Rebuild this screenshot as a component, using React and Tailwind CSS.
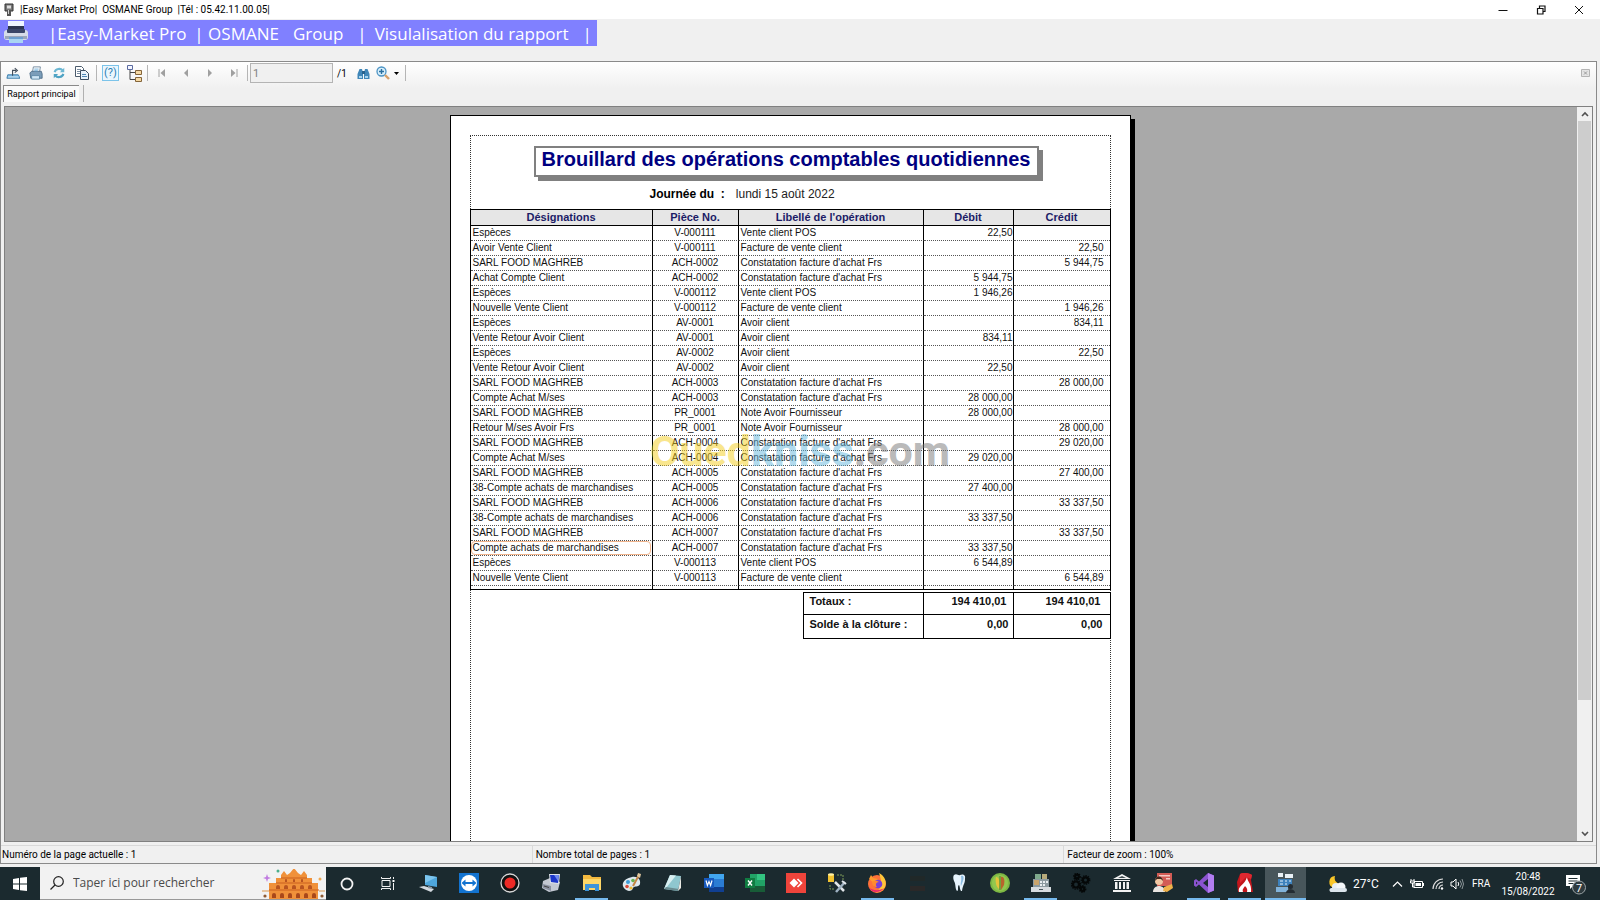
import React from 'react'

const achat = "Constatation facture d'achat Frs"

const rows = [
  ['Espèces', 'V-000111', 'Vente client POS', '22,50', ''],
  ['Avoir Vente Client', 'V-000111', 'Facture de vente client', '', '22,50'],
  ['SARL FOOD MAGHREB', 'ACH-0002', achat, '', '5 944,75'],
  ['Achat Compte Client', 'ACH-0002', achat, '5 944,75', ''],
  ['Espèces', 'V-000112', 'Vente client POS', '1 946,26', ''],
  ['Nouvelle Vente Client', 'V-000112', 'Facture de vente client', '', '1 946,26'],
  ['Espèces', 'AV-0001', 'Avoir client', '', '834,11'],
  ['Vente Retour Avoir Client', 'AV-0001', 'Avoir client', '834,11', ''],
  ['Espèces', 'AV-0002', 'Avoir client', '', '22,50'],
  ['Vente Retour Avoir Client', 'AV-0002', 'Avoir client', '22,50', ''],
  ['SARL FOOD MAGHREB', 'ACH-0003', achat, '', '28 000,00'],
  ['Compte Achat M/ses', 'ACH-0003', achat, '28 000,00', ''],
  ['SARL FOOD MAGHREB', 'PR_0001', 'Note Avoir Fournisseur', '28 000,00', ''],
  ['Retour M/ses Avoir Frs', 'PR_0001', 'Note Avoir Fournisseur', '', '28 000,00'],
  ['SARL FOOD MAGHREB', 'ACH-0004', achat, '', '29 020,00'],
  ['Compte Achat M/ses', 'ACH-0004', achat, '29 020,00', ''],
  ['SARL FOOD MAGHREB', 'ACH-0005', achat, '', '27 400,00'],
  ['38-Compte achats de marchandises', 'ACH-0005', achat, '27 400,00', ''],
  ['SARL FOOD MAGHREB', 'ACH-0006', achat, '', '33 337,50'],
  ['38-Compte achats de marchandises', 'ACH-0006', achat, '33 337,50', ''],
  ['SARL FOOD MAGHREB', 'ACH-0007', achat, '', '33 337,50'],
  ['Compte achats de marchandises', 'ACH-0007', achat, '33 337,50', ''],
  ['Espèces', 'V-000113', 'Vente client POS', '6 544,89', ''],
  ['Nouvelle Vente Client', 'V-000113', 'Facture de vente client', '', '6 544,89'],
]

const selectedRow = 21

function Icon({ children, className = 'w-5 h-5', box = '0 0 20 20' }) {
  return (
    <svg viewBox={box} className={className} fill="none" aria-hidden="true">
      {children}
    </svg>
  )
}

/* ---------- Title bar and banner ---------- */

function TitleBar() {
  return (
    <header className="flex items-center h-[19px] bg-white text-[10px] leading-4 text-black shrink-0">
      <Icon className="w-[10px] h-[14px] ml-1 mr-[6px]" box="0 0 10 14">
        <path d="M1 1h8v7H1z" fill="#777" stroke="#333" />
        <path d="M3 2.500h4v3H3z" fill="#ddd" />
        <path d="M3 8h4v5H3z" fill="#555" />
        <path d="M4.500 7v4" stroke="#ccc" />
      </Icon>
      <h1 className="flex-1 whitespace-pre">|Easy Market Pro|  OSMANE Group  |Tél : 05.42.11.00.05|</h1>
      <button aria-label="Réduire" className="w-[38px] flex justify-center">
        <Icon className="w-[10px] h-[10px]" box="0 0 10 10">
          <path d="M0.500 5.500h9" stroke="#111" />
        </Icon>
      </button>
      <button aria-label="Restaurer" className="w-[38px] flex justify-center">
        <Icon className="w-[10px] h-[10px]" box="0 0 10 10">
          <path d="M1.500 3.500h5.500v5.500H1.500zM3.500 3.500v-2.500h5.500v5.500H7" stroke="#111" strokeWidth="1.200" />
        </Icon>
      </button>
      <button aria-label="Fermer" className="w-[38px] flex justify-center mr-[2px]">
        <Icon className="w-[10px] h-[10px]" box="0 0 10 10">
          <path d="M1 1l8 8M9 1l-8 8" stroke="#111" />
        </Icon>
      </button>
    </header>
  )
}

function Banner() {
  return (
    <div className="h-[42px] pt-px shrink-0">
      <div className="flex items-center w-[597px] h-[26px] bg-[#8080ff] text-white text-[17px] leading-6 font-medium whitespace-nowrap pl-1 pt-[2px] font-['Open_Sans','Segoe_UI',sans-serif]">
        <Icon className="w-6 h-6 mr-5 mb-1" box="0 0 24 24">
          <path d="M4 1h16v9H4z" fill="#eef4ff" />
          <path d="M4 6h16v5H4z" fill="#2c3550" />
          <rect x="0" y="10" width="24" height="10" rx="3" fill="#d5dce8" />
          <rect x="3" y="9" width="18" height="4" rx="1" fill="#3a4668" />
          <path d="M1 16h22v3H1z" fill="#9aa6ba" />
          <path d="M5 17h14v6H5z" fill="#a9d4f2" />
          <path d="M5 17h14v2H5z" fill="#6d9fd0" />
        </Icon>
        <span>|Easy-Market Pro</span>
        <span className="ml-2">| OSMANE</span>
        <span className="ml-[14px]">Group</span>
        <span className="ml-[14px]">|</span>
        <span className="ml-2">Visulalisation du rapport</span>
        <span className="ml-[14px]">|</span>
      </div>
    </div>
  )
}

/* ---------- Report viewer toolbar ---------- */

function Separator() {
  return <span className="w-px h-4 bg-[#b5b5b5] mx-[2px]" />
}

function ToolButton({ label, children, className = 'w-[23px]' }) {
  return (
    <button aria-label={label} className={`flex items-center justify-center h-5 ${className}`}>
      {children}
    </button>
  )
}

function Toolbar() {
  return (
    <div role="toolbar" className="flex items-center h-[22px] pr-[6px]">
      <ToolButton label="Exporter">
        <Icon className="w-[14px] h-[14px]" box="0 0 16 16">
          <path d="M2 10h12l2 4H1z" fill="#7db8e0" stroke="#3b7ba8" />
          <path d="M2.500 12.500h12" stroke="#dff0fb" />
          <path d="M7.500 11V5h4M10 2.500L13 5l-3 2.500" stroke="#444f5c" strokeWidth="1.300" />
        </Icon>
      </ToolButton>
      <ToolButton label="Imprimer">
        <Icon className="w-[14px] h-[14px]" box="0 0 16 16">
          <path d="M5 1h8l-1 6H4z" fill="#fff" stroke="#6a8298" />
          <path d="M1 8l2-2h11l1 3v5H2z" fill="#7b9db9" stroke="#4d6c86" />
          <path d="M3 11h9v4H3z" fill="#cfe6f5" stroke="#5d87a5" />
          <path d="M6 3.500h5M6 5.500h4" stroke="#62a9d8" />
        </Icon>
      </ToolButton>
      <ToolButton label="Actualiser">
        <Icon className="w-[14px] h-[14px]" box="0 0 16 16">
          <path d="M3 7c1-4 7-5 9-2" stroke="#6cb7d3" strokeWidth="2.400" />
          <path d="M14 2v5H9z" fill="#6cb7d3" />
          <path d="M13 9c-1 4-7 5-9 2" stroke="#4fa3c4" strokeWidth="2.400" />
          <path d="M2 14V9h5z" fill="#4fa3c4" />
        </Icon>
      </ToolButton>
      <ToolButton label="Copier" className="w-6">
        <Icon className="w-4 h-4" box="0 0 16 16">
          <path d="M1.500 1.500h6l2 2v8h-8z" fill="#fff" stroke="#4b5b6c" />
          <path d="M3 4.500h4M3 6.500h4M3 8.500h4" stroke="#7b8ea1" />
          <path d="M6.500 5.500h5l3 3v6h-8z" fill="#e8f2fa" stroke="#3c4d5f" />
          <path d="M8 9.500h4M8 11.500h5" stroke="#4e86b4" />
        </Icon>
      </ToolButton>
      <Separator />
      <ToolButton label="Panneau de paramètres">
        <span className="flex items-center justify-center w-[17px] h-4 border border-[#7cc4ea] bg-[#eaf6fd] text-[#2c7fb4] text-[11px] leading-3">
          (?)
        </span>
      </ToolButton>
      <ToolButton label="Arborescence des groupes" className="w-[23px]">
        <Icon className="w-4 h-[18px]" box="0 0 16 18">
          <path d="M4 5v10.500h6M4 8.500h6" stroke="#444" />
          <path d="M1.500 1.500h5v4h-5z" fill="#f4f6ff" stroke="#5a6aa0" />
          <path d="M9.500 6.500h6v4h-6zM9.500 13.500h6v4h-6z" fill="#f6d9a4" stroke="#84653a" />
        </Icon>
      </ToolButton>
      <Separator />
      <ToolButton label="Première page" className="w-6">
        <Icon className="w-[8px] h-[8px]" box="0 0 8 8">
          <path d="M1 0v8" stroke="#a0a0a0" />
          <path d="M7 0v8L2.500 4z" fill="#a0a0a0" />
        </Icon>
      </ToolButton>
      <ToolButton label="Page précédente" className="w-6">
        <Icon className="w-[8px] h-[8px]" box="0 0 8 8">
          <path d="M6 0v8L2 4z" fill="#a0a0a0" />
        </Icon>
      </ToolButton>
      <ToolButton label="Page suivante" className="w-6">
        <Icon className="w-[8px] h-[8px]" box="0 0 8 8">
          <path d="M2 0v8l4-4z" fill="#a0a0a0" />
        </Icon>
      </ToolButton>
      <ToolButton label="Dernière page">
        <Icon className="w-[8px] h-[8px]" box="0 0 8 8">
          <path d="M7 0v8" stroke="#a0a0a0" />
          <path d="M1 0v8l4.500-4z" fill="#a0a0a0" />
        </Icon>
      </ToolButton>
      <Separator />
      <input
        aria-label="Page"
        defaultValue="1"
        className="w-[83px] h-5 px-[2px] border border-[#b4b4b4] bg-[#f0f0f0] text-[11px] text-[#808080]"
      />
      <span className="ml-1 mr-[5px] text-[10px] text-black">/1</span>
      <ToolButton label="Rechercher">
        <Icon className="w-[13px] h-[13px]" box="0 0 13 13">
          <path d="M2.500 2h2.500l1 4v6H0.500V7zM10.500 2H8L7 6v6h5.500V7z" fill="#3f86b8" />
          <path d="M2 9h3v2H2zM8 9h3v2H8z" fill="#a8d5ef" />
          <path d="M5 4h3v3H5z" fill="#27628d" />
        </Icon>
      </ToolButton>
      <button aria-label="Zoom" className="flex items-center gap-1 h-5 ml-px">
        <Icon className="w-[14px] h-[14px]" box="0 0 14 14">
          <circle cx="5.500" cy="5.500" r="4.500" fill="#d9effb" stroke="#4b93c4" strokeWidth="1.300" />
          <path d="M3 5.500h5M5.500 3v5" stroke="#2a6f9f" strokeWidth="1.400" />
          <path d="M9 9l4 4" stroke="#d8a069" strokeWidth="2.400" />
        </Icon>
        <Icon className="w-[5px] h-[3px]" box="0 0 5 3">
          <path d="M0 0h5L2.500 3z" fill="#000" />
        </Icon>
      </button>
      <span className="w-px h-4 bg-[#b5b5b5] ml-[6px]" />
      <button aria-label="Fermer la vue" className="ml-auto">
        <Icon className="w-[9px] h-[8px]" box="0 0 9 8">
          <path d="M0.500 0.500h8v7h-8z" fill="#e4e4e4" stroke="#b4b4b4" />
          <path d="M3 2.500l3 3M6 2.500l-3 3" stroke="#999" />
        </Icon>
      </button>
    </div>
  )
}

function Tabs() {
  return (
    <div role="tablist" className="flex h-[22px] pl-[2px] pt-px">
      <button
        role="tab"
        aria-selected="true"
        className="h-[17px] w-[76px] border-l border-t border-[#8a8a8a] bg-[#fafafa] text-[9px] leading-4 text-black whitespace-nowrap text-center"
      >
        Rapport principal
      </button>
      <span className="w-px h-[17px] bg-[#b0b0b0] ml-1" />
    </div>
  )
}

/* ---------- Report page ---------- */

function ReportTable() {
  return (
    <table className="-ml-px -mr-px w-[641px] table-fixed border-separate border-spacing-0 border border-black text-[10px] leading-[14px] text-[#111]">
      <colgroup>
        <col className="w-[182px]" />
        <col className="w-[86px]" />
        <col className="w-[185px]" />
        <col className="w-[90px]" />
        <col />
      </colgroup>
      <thead>
        <tr className="h-4 bg-[#e6e6e6] text-[11px] leading-[15px] text-[#1c1c66]">
          {['Désignations', 'Pièce No.', "Libellé de l'opération", 'Débit', 'Crédit'].map((title) => (
            <th key={title} className="p-0 font-bold border-b border-r last:border-r-0 border-black">
              {title}
            </th>
          ))}
        </tr>
      </thead>
      <tbody>
        {rows.map((row, idx) => (
          <tr key={idx} className="h-[15px] whitespace-nowrap">
            <td className="p-0 border-r border-r-black border-b border-b-[#555] [border-bottom-style:dotted]">
              <div
                className={
                  idx === selectedRow
                    ? 'pl-px mr-px rounded-[4px] border border-[#f0b48c] leading-3'
                    : 'pl-[2px]'
                }
              >
                {row[0]}
              </div>
            </td>
            <td className="p-0 text-center border-r border-r-black border-b border-b-[#555] [border-bottom-style:dotted]">
              {row[1]}
            </td>
            <td className="p-0 pl-[2px] border-r border-r-black border-b border-b-[#555] [border-bottom-style:dotted]">
              {row[2]}
            </td>
            <td className="p-0 text-right border-r border-r-black border-b border-b-[#555] [border-bottom-style:dotted]">
              {row[3]}
            </td>
            <td className="p-0 pr-[6px] text-right border-b border-b-[#555] [border-bottom-style:dotted]">{row[4]}</td>
          </tr>
        ))}
        <tr className="h-[3px]">
          <td className="p-0 border-r border-black" />
          <td className="p-0 border-r border-black" />
          <td className="p-0 border-r border-black" />
          <td className="p-0 border-r border-black" />
          <td className="p-0" />
        </tr>
      </tbody>
    </table>
  )
}

function Totals() {
  return (
    <table className="ml-auto -mr-px mt-[2px] w-[308px] table-fixed border-separate border-spacing-0 border border-black text-[11px] leading-4 text-[#111] font-bold">
      <colgroup>
        <col className="w-[120px]" />
        <col className="w-[90px]" />
        <col />
      </colgroup>
      <tbody>
        <tr className="h-[22px] align-top">
          <th scope="row" className="p-0 pl-[6px] text-left border-r border-b border-black">Totaux :</th>
          <td className="p-0 pr-[6px] text-right border-r border-b border-black">194 410,01</td>
          <td className="p-0 pr-[9px] text-right border-b border-black">194 410,01</td>
        </tr>
        <tr className="h-[23px] align-top">
          <th scope="row" className="p-0 pt-px pl-[6px] text-left border-r border-black">Solde à la clôture :</th>
          <td className="p-0 pt-px pr-1 text-right border-r border-black">0,00</td>
          <td className="p-0 pt-px pr-[7px] text-right">0,00</td>
        </tr>
      </tbody>
    </table>
  )
}

function ReportPage() {
  return (
    <article className="w-[681px] min-h-[960px] mx-auto mt-2 shrink-0 bg-white border border-black shadow-[4px_4px_0_#000] pt-[19px] px-[19px] font-['Liberation_Sans',Arial,sans-serif]">
      <div className="min-h-[920px] border border-dotted border-[#333]">
        <h2 className="w-[505px] h-[31px] ml-[63px] mt-[10px] border-2 border-[#808080] bg-white shadow-[4px_4px_0_#808080] text-center text-[20px] leading-[22px] font-bold text-[#000080] whitespace-nowrap">
          Brouillard des opérations comptables quotidiennes
        </h2>
        <p className="flex mt-2 mb-[6px] pl-[179px] text-[12px] leading-[18px]">
          <span className="font-bold text-black whitespace-pre">Journée du  :</span>
          <span className="ml-[11px] text-[#222]">lundi 15 août 2022</span>
        </p>
        <ReportTable />
        <Totals />
      </div>
    </article>
  )
}

function ScrollBar() {
  return (
    <div className="w-[15px] shrink-0 flex flex-col bg-[#f0f0f0]">
      <button aria-label="Défiler vers le haut" className="flex justify-center items-center h-[14px]">
        <Icon className="w-[8px] h-[6px]" box="0 0 8 6">
          <path d="M1 5l3-3 3 3" stroke="#505050" strokeWidth="1.600" />
        </Icon>
      </button>
      <div className="flex-1 flex flex-col">
        <div className="h-[82%] bg-[#cdcdcd] mx-px" />
      </div>
      <button aria-label="Défiler vers le bas" className="flex justify-center items-center h-[14px]">
        <Icon className="w-[8px] h-[6px]" box="0 0 8 6">
          <path d="M1 1l3 3 3-3" stroke="#505050" strokeWidth="1.600" />
        </Icon>
      </button>
    </div>
  )
}

function StatusBar() {
  return (
    <footer className="grid grid-cols-3 h-[18px] border-t border-[#d9d9d9] text-[10px] leading-[17px] text-black divide-x divide-[#d9d9d9] shrink-0">
      <span className="pl-px">Numéro de la page actuelle : 1</span>
      <span className="pl-[3px]">Nombre total de pages : 1</span>
      <span className="pl-[3px]">Facteur de zoom : 100%</span>
    </footer>
  )
}

/* ---------- Windows taskbar ---------- */

const apps = [
  {
    name: 'Bureau à distance',
    art: (
      <>
        <path d="M7 2l12 2v10L7 12z" fill="#4ea6dc" />
        <path d="M7 2l12 2-12 6z" fill="#7cc5ee" />
        <path d="M1 14l5-1 10 3-3 3z" fill="#d4dae0" />
        <path d="M10 13l4 1v2l-4-1z" fill="#8b98a5" />
      </>
    ),
  },
  {
    name: 'TeamViewer',
    art: (
      <>
        <path d="M0 0h20v20H0z" fill="#1273d0" />
        <circle cx="10" cy="10" r="8" fill="#fff" />
        <path d="M2.500 10l4-3.500v2.500h7V6.500l4 3.500-4 3.500V11h-7v2.500z" fill="#1273d0" />
      </>
    ),
  },
  {
    name: 'Enregistreur',
    art: (
      <>
        <circle cx="10" cy="10" r="9" fill="#111" stroke="#d8d8d8" strokeWidth="1.300" />
        <circle cx="10" cy="10" r="5.500" fill="#ee2a26" />
      </>
    ),
  },
  {
    name: 'Poste',
    art: (
      <>
        <path d="M2 8l7-3 10 4-2 8-9 2-7-4z" fill="#c3c8d2" />
        <path d="M8 1l11 0-1 10-9-1z" fill="#dde2ea" />
        <path d="M9 2l9 0-1 8-7-1z" fill="#1c36c9" />
        <path d="M13 2l5 0-1 6z" fill="#6f8bf0" />
        <path d="M2 11l8 2v5l-8-3z" fill="#8990a0" />
        <path d="M3 13l5 1.500" stroke="#444" />
      </>
    ),
  },
  {
    name: 'Explorateur de fichiers',
    running: true,
    art: (
      <>
        <path d="M1 2h7l2 2h9v13H1z" fill="#f3b93f" />
        <path d="M1 6h18v11H1z" fill="#fdd667" />
        <path d="M3 11h14v7h-4v-3H7v3H3z" fill="#3d93d8" />
      </>
    ),
  },
  {
    name: 'Paint',
    art: (
      <>
        <path d="M10 4c6-1 9 3 8 7-1 3-4 2-6 3s-1 4-5 4C2 17 0 13 1 10s4-5 9-6z" fill="#dfe9ee" />
        <circle cx="6" cy="9" r="2" fill="#3f9ed8" />
        <circle cx="5" cy="13.500" r="1.800" fill="#d94c3a" />
        <circle cx="11" cy="7.500" r="1.800" fill="#65b34c" />
        <circle cx="9" cy="15" r="1.600" fill="#ebb932" />
        <path d="M17 2l-6 11" stroke="#c58544" strokeWidth="2" />
        <path d="M16 0l3 1-1 4-3-2z" fill="#dfc7a0" />
      </>
    ),
  },
  {
    name: 'Bloc-notes',
    art: (
      <>
        <path d="M7 2l11 1-3 15-14-2z" fill="#8fc7cf" />
        <path d="M7 2l6 0.500L3 15l-2 1z" fill="#d9eff1" />
        <path d="M1 16l14 2 1-2-13-2z" fill="#6a8c91" />
        <path d="M18 3l-3 15 3-3z" fill="#e9e9e4" />
      </>
    ),
  },
  {
    name: 'Word',
    art: (
      <>
        <path d="M5 1h15v18H5z" fill="#2b7cd3" />
        <path d="M5 1h15v5H5z" fill="#41a5ee" />
        <path d="M5 14h15v5H5z" fill="#103f91" />
        <path d="M0 5h10v10H0z" fill="#185abd" />
        <path d="M2 7.500l1.400 5L5 8.500l1.600 4 1.400-5" stroke="#fff" strokeWidth="1.200" />
      </>
    ),
  },
  {
    name: 'Excel',
    art: (
      <>
        <path d="M5 1h15v18H5z" fill="#21a366" />
        <path d="M12 1h8v6h-8z" fill="#33c481" />
        <path d="M5 13h15v6H5z" fill="#185c37" />
        <path d="M0 5h10v10H0z" fill="#107c41" />
        <path d="M3 7.500l4 5M7 7.500l-4 5" stroke="#fff" strokeWidth="1.400" />
      </>
    ),
  },
  {
    name: 'AnyDesk',
    art: (
      <>
        <path d="M0 0h20v20H0z" fill="#ef443b" />
        <path d="M8 5.500l4.500 4.500L8 14.500 3.500 10z" fill="#fff" />
        <path d="M11.500 6l4 4-4 4" stroke="#fff" strokeWidth="1.600" />
      </>
    ),
  },
  {
    name: 'SQL Server Management Studio',
    art: (
      <>
        <path d="M1 1h6v8H1z" fill="#f2c230" />
        <ellipse cx="4" cy="1.500" rx="3" ry="1.300" fill="#fff0a3" />
        <path d="M10 2h6v5M3 12v4h4" stroke="#7f9b58" strokeDasharray="2 1" />
        <path d="M8 9l9 9" stroke="#e1e6ea" strokeWidth="2.500" />
        <path d="M18 9l-9 10" stroke="#9eb1c2" strokeWidth="2.500" />
        <path d="M15 8l4 3" stroke="#e1e6ea" strokeWidth="2" />
      </>
    ),
  },
  {
    name: 'Firefox',
    running: true,
    art: (
      <>
        <circle cx="10" cy="11" r="9" fill="#ff7139" />
        <path d="M12 0c6 3 8 9 6 14-2 4-6 6-10 5 6-2 8-8 4-19z" fill="#ffc53a" />
        <path d="M2 6l2-4 2 3 5 1-3 5z" fill="#ff9b2e" />
        <path d="M2 14c2 6 11 7 15 1-4 3-12 3-15-1z" fill="#e8286b" />
        <circle cx="11" cy="11" r="4.300" fill="#7b3fd6" />
        <path d="M5 9c3-2 5-1 7 0-3 0-4 3-2 5-3 0-5-2-5-5z" fill="#ff8a2d" />
      </>
    ),
  },
  {
    name: 'Terminal',
    art: (
      <>
        <path d="M2 3h15v5H2z" fill="#202828" />
        <path d="M2 13h15v5H2z" fill="#2a2828" />
      </>
    ),
  },
  {
    name: 'Cabinet dentaire',
    art: (
      <>
        <path d="M5 2c3-2 4 1 6 0s6-1 5 4c0 5-2 5-3 12-2 1-2-5-3-6-2 1 0 6-2 6-2-2-1-7-3-10-1-2-1-5 0-6z" fill="#e6f3fc" />
        <path d="M12 3c3-1 3 2 2 5l-2 5c-1-3 1-5 0-10z" fill="#8dbde2" />
      </>
    ),
  },
  {
    name: 'Nutrition',
    art: (
      <>
        <circle cx="10" cy="10" r="10" fill="#7db843" />
        <circle cx="10" cy="10" r="8" fill="#92c74f" />
        <path d="M6 4c3 0 4 4 3 12-3-2-4-8-3-12z" fill="#e7c33a" />
        <path d="M11 4c3-1 4 3 3 8l-3 5z" fill="#b8642c" />
        <path d="M10 3v14" stroke="#547d29" />
      </>
    ),
  },
  {
    name: 'Caisse enregistreuse',
    running: true,
    art: (
      <>
        <path d="M4 1h6v5H4z" fill="#7fa98c" />
        <path d="M11 1h5v5h-5z" fill="#b7aa7a" />
        <path d="M2 6h16v8H2z" fill="#8c9aa0" />
        <path d="M3 7h5v5H3z" fill="#c9a46c" />
        <path d="M9 8h2v2H9zM12 8h2v2h-2zM15 8h2v2h-2zM9 11h2v2H9zM12 11h2v2h-2z" fill="#e8edf0" />
        <path d="M0 14h20v5H0z" fill="#d7dce0" />
        <path d="M8 16h4v1H8z" fill="#49555c" />
      </>
    ),
  },
  {
    name: 'Services',
    art: (
      <g stroke="#050808">
        <g strokeWidth="2.200">
          <circle cx="6" cy="3.500" r="1.800" />
          <circle cx="14.500" cy="7" r="2.600" />
          <circle cx="5" cy="11.500" r="3" />
          <circle cx="11.500" cy="16" r="1.800" />
        </g>
        <g strokeWidth="1.400" strokeDasharray="1.400 1">
          <circle cx="6" cy="3.500" r="3.200" />
          <circle cx="14.500" cy="7" r="4.200" />
          <circle cx="5" cy="11.500" r="4.600" />
          <circle cx="11.500" cy="16" r="3.200" />
        </g>
      </g>
    ),
  },
  {
    name: 'Banque',
    art: (
      <>
        <path d="M10 1l9 5H1zM2 7h16v1H2zM3 9h2.500v7H3zM7 9h2v7H7zM11 9h2v7h-2zM14.500 9H17v7h-2.500zM1 17h18v2H1z" fill="#f2f2f2" />
        <path d="M10 3l4 2H6z" fill="#3f4b50" />
      </>
    ),
  },
  {
    name: 'Gestion clients',
    art: (
      <>
        <path d="M4 0h15v13H4z" fill="#d35c55" />
        <path d="M6 2h11v1.500H6zM13 5h4v1.500h-4z" fill="#f5c9c4" />
        <circle cx="6" cy="8" r="4" fill="#f1c6a2" />
        <path d="M2 8c0-6 8-6 8 0l-2-2H4z" fill="#43281f" />
        <path d="M0 19c0-8 12-8 12 0z" fill="#e9e4e1" />
        <path d="M11 14l8-3 1 4-6 4-4-1z" fill="#f0b24a" />
      </>
    ),
  },
  {
    name: 'Visual Studio',
    running: true,
    art: (
      <>
        <path d="M14 0l6 2.500v15L14 20 5 11.500 2 14l-2-1.500v-5L2 6l3 2.500z" fill="#8b53d0" />
        <path d="M14 0l6 2.500v15L14 20z" fill="#b27df0" />
        <path d="M14 6v8l-5-4z" fill="#1b2a2f" />
        <path d="M2 8.500v3L3.500 10z" fill="#1b2a2f" />
      </>
    ),
  },
  {
    name: 'Gestion incendie',
    running: true,
    art: (
      <>
        <path d="M5 1c4-2 9-1 12 1l-1 5 2 12h-4L3 19 2 9z" fill="#c3161c" />
        <path d="M12 4c0 4 5 7 4 15h-4c1-3-1-5-2-6-1 2-3 3-2 6H4c-2-6 6-7 8-15z" fill="#fff" />
        <path d="M5 1c4-2 9-1 12 1l-1 4-5-2-6 6z" fill="#de2830" />
      </>
    ),
  },
  {
    name: 'Easy Market Pro',
    running: true,
    active: true,
    art: (
      <>
        <path d="M3 0h5v4H3zM10 1h8v4h-8z" fill="#e9f1f6" />
        <path d="M3 6h14v7H3z" fill="#3d82bd" />
        <path d="M5 8h3M10 8h2M14 8h2M5 11h3M10 11h2" stroke="#e1eff9" />
        <path d="M1 14h12v5H1z" fill="#82b3da" />
        <circle cx="15.500" cy="13.500" r="2.500" fill="#232c33" />
        <path d="M11 20c0-5 9-5 9 0z" fill="#232c33" />
      </>
    ),
  },
]

function SearchBox() {
  return (
    <div className="flex items-center w-[286px] h-full bg-[#f2f2f2] border-b border-[#999] pl-[10px] shrink-0">
      <Icon className="w-[14px] h-[14px] mr-[9px]" box="0 0 14 14">
        <circle cx="8.500" cy="5.500" r="4.800" stroke="#222" strokeWidth="1.200" />
        <path d="M5 9l-4.500 4.500" stroke="#222" strokeWidth="1.200" />
      </Icon>
      <input
        aria-label="Taper ici pour rechercher"
        placeholder="Taper ici pour rechercher"
        className="flex-1 min-w-0 bg-transparent text-[12px] leading-5 placeholder:text-[#4a4a4a] font-['Open_Sans','Segoe_UI',sans-serif]"
      />
      <Icon className="w-[64px] h-[30px] self-end" box="0 0 64 30">
        <path d="M7 30V14h7V9h5V6l3-4 3 4 3-2 4-5 4 5 3 2 3-4 3 4v3h5v5h6v16z" fill="#f0913a" />
        <path d="M14 14h36M7 21h50M19 9h26" stroke="#c9601f" strokeWidth="1.200" />
        {[12, 20, 28, 36, 44, 52].map((x) => (
          <path key={x} d={`M${x - 2} 29v-3a2 2 0 0 1 4 0v3z`} fill="#a9481a" />
        ))}
        {[16, 24, 32, 40, 48].map((x) => (
          <path key={x} d={`M${x - 2} 20v-2a2 2 0 0 1 4 0v2z`} fill="#b85420" />
        ))}
        {[24, 32, 40].map((x) => (
          <path key={x} d={`M${x - 1} 13v-2a1 1 0 0 1 2 0v2z`} fill="#b85420" />
        ))}
        <path d="M0 22h7M57 22h6" stroke="#d9974e" />
        <path d="M5 5l1 3 3 1-3 1-1 3-1-3-3-1 3-1z" fill="#c07be0" />
        <circle cx="16" cy="2" r="1.500" fill="#4aae8b" />
        <circle cx="58" cy="10" r="1.500" fill="#f0a850" />
        <circle cx="3" cy="27" r="1.600" fill="#8f5a32" />
        <circle cx="60" cy="27" r="1.600" fill="#8f5a32" />
      </Icon>
    </div>
  )
}

function Tray() {
  return (
    <div className="flex items-center w-[294px] h-full shrink-0 text-white text-[11px] leading-[14px] pl-[21px]">
      <Icon className="w-5 h-[18px] mr-[6px]" box="0 0 20 18">
        <path d="M8 1a6 6 0 1 0 6 8A6 6 0 0 1 8 1z" fill="#f9c629" />
        <circle cx="9" cy="12" r="4" fill="#e8eef3" />
        <circle cx="14" cy="12" r="4.500" fill="#f4f7fa" />
        <path d="M4 13h14a2 2 0 0 1 0 4H5a2 2 0 0 1-1-4z" fill="#dce5ec" />
      </Icon>
      <span className="w-[39px] text-[12px]">27°C</span>
      <button aria-label="Icônes cachées" className="mr-[7px]">
        <Icon className="w-[11px] h-[6px]" box="0 0 11 6">
          <path d="M1 5.500L5.500 1 10 5.500" stroke="#fff" strokeWidth="1.200" />
        </Icon>
      </button>
      <Icon className="w-[14px] h-[10px] mr-2" box="0 0 14 10">
        <path d="M4 2.500h8.500v6H4z" stroke="#fff" />
        <path d="M5.500 4H11v3H5.500zM13 4h1v3h-1z" fill="#fff" />
        <path d="M1 0v2M4 0v2M0.500 2h4v2h-4zM2.500 4v4h2" stroke="#fff" />
      </Icon>
      <Icon className="w-3 h-3 mr-[6px]" box="0 0 12 12">
        <path d="M1 11A10 10 0 0 1 11 1M4 11a7 7 0 0 1 7-7M7 11a4 4 0 0 1 4-4" stroke="#ddd" strokeWidth="1.200" />
        <circle cx="10" cy="10.500" r="1.200" fill="#fff" />
      </Icon>
      <Icon className="w-[14px] h-3 mr-2" box="0 0 14 12">
        <path d="M1 4h2l3-3v10L3 8H1z" stroke="#fff" />
        <path d="M8 4q1.500 2 0 4" stroke="#fff" />
        <path d="M10 2.500q3 3.500 0 7M12 1q3 5 0 10" stroke="#8c9699" />
      </Icon>
      <span className="w-[26px] text-[10px]">FRA</span>
      <div className="flex-1 text-center text-[10px] leading-[15px]">
        <div>20:48</div>
        <div>15/08/2022</div>
      </div>
      <button aria-label="Notifications" className="ml-2 mr-[14px]">
        <Icon className="w-5 h-[22px]" box="0 0 20 22">
          <path d="M0 2h14v11H7l-3 3v-3H0z" fill="#fff" />
          <path d="M2.500 5.500h9M2.500 8h9M2.500 10.500h5" stroke="#1b2a2f" />
          <circle cx="13" cy="14.500" r="6.500" fill="#2e3a3e" stroke="#9aa3a6" />
          <text x="13" y="18.500" textAnchor="middle" fontSize="11" fill="#fff">7</text>
        </Icon>
      </button>
    </div>
  )
}

function Taskbar() {
  return (
    <nav className="flex items-center h-[33px] bg-[#1b2a2f] shrink-0">
      <button aria-label="Démarrer" className="flex justify-center w-10 shrink-0">
        <Icon className="w-[14px] h-[14px]" box="0 0 14 14">
          <path d="M0 2l6-1v5.500H0zM7 0.800L14 0v6.500H7zM0 7.500h6V13l-6-1zM7 7.500h7V14l-7-0.800z" fill="#fff" />
        </Icon>
      </button>
      <SearchBox />
      <button aria-label="Cortana" className="flex justify-center w-[41px] shrink-0">
        <Icon className="w-[14px] h-[14px]" box="0 0 14 14">
          <circle cx="7" cy="7" r="5.500" stroke="#f2f2f2" strokeWidth="1.800" />
        </Icon>
      </button>
      <button aria-label="Affichage des tâches" className="flex justify-center w-[41px] shrink-0">
        <Icon className="w-[14px] h-[13px]" box="0 0 14 13">
          <path d="M1 3.500h8v6H1zM0.500 0v1.500h9V0M0.500 13v-1.500h9V13M12.500 0v2M12.500 6v7" stroke="#f2f2f2" />
          <path d="M11.500 3h2v2h-2z" fill="#fff" />
        </Icon>
      </button>
      <div className="flex flex-1 h-full">
        {apps.map((app) => (
          <button
            key={app.name}
            aria-label={app.name}
            className={`flex flex-col items-center flex-1 pt-[6px] ${app.active ? 'bg-[#48565b]' : ''}`}
          >
            <Icon className="w-5 h-5">{app.art}</Icon>
            {app.running && (
              <span className={`mt-auto h-[2px] bg-[#76b9ed] ${app.active ? 'w-full' : 'w-[33px]'}`} />
            )}
          </button>
        ))}
      </div>
      <Tray />
    </nav>
  )
}

function Watermark() {
  return (
    <div className="absolute inset-0 flex items-center justify-center pt-[2px] pointer-events-none opacity-50">
      <span className="font-[Roboto,sans-serif] font-bold text-[43px] leading-none">
        <span className="text-[#f5cf1d]">Oued</span>
        <span className="text-[#63b6dc]">kniss</span>
        <span className="text-[#777777]">.com</span>
      </span>
    </div>
  )
}

function App() {
  return (
    <div className="relative flex flex-col h-screen overflow-hidden bg-[#f0f0f0] font-['Roboto','Segoe_UI',sans-serif]">
      <TitleBar />
      <Banner />
      <main className="flex flex-col flex-1 min-h-0 mr-[3px] mb-[3px] border border-[#8a8a8a]">
        <div className="shrink-0 bg-linear-to-b from-white to-[#f0f0f0] to-60%">
          <Toolbar />
          <Tabs />
        </div>
        <div className="flex flex-1 min-h-0 ml-[3px] mr-[3px] mb-[3px] border border-[#808080]">
          <div className="flex-1 min-w-0 pr-[2px] overflow-hidden bg-[#a9a9a9]">
            <ReportPage />
          </div>
          <ScrollBar />
        </div>
        <StatusBar />
      </main>
      <Taskbar />
      <Watermark />
    </div>
  )
}

export default App
